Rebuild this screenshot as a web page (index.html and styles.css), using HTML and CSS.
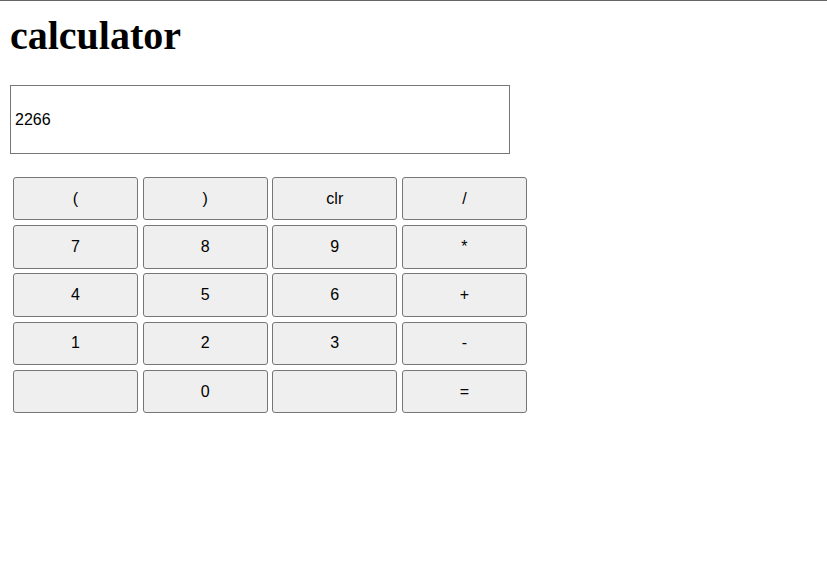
FILE: index.html
```html
<!DOCTYPE html>
<html>
<head>
<meta charset="utf-8">
<title>calculator</title>
<link rel="stylesheet" href="styles.css">
</head>
<body>
<h1 class="title">calculator</h1>
<input class="display" type="text" value="2266">
<div class="keys">
  <button class="key">(</button>
  <button class="key">)</button>
  <button class="key">clr</button>
  <button class="key">/</button>
  <button class="key">7</button>
  <button class="key">8</button>
  <button class="key">9</button>
  <button class="key">*</button>
  <button class="key">4</button>
  <button class="key">5</button>
  <button class="key">6</button>
  <button class="key">+</button>
  <button class="key">1</button>
  <button class="key">2</button>
  <button class="key">3</button>
  <button class="key">-</button>
  <button class="key"></button>
  <button class="key">0</button>
  <button class="key"></button>
  <button class="key">=</button>
</div>
</body>
</html>
```
FILE: styles.css
```css
html {
  border-top: 1px solid #666;
  background: #fff;
}
body {
  margin: 0;
  padding: 0 10px;
  font-family: "Liberation Serif", serif;
}
.title {
  font-family: "Liberation Serif", serif;
  font-size: 40px;
  font-weight: bold;
  line-height: 46px;
  margin: 12px 0 0;
  color: #000;
}
.display {
  display: block;
  box-sizing: border-box;
  width: 500px;
  height: 69px;
  margin-top: 26px;
  padding: 0 4px;
  border: 1px solid #767676;
  font-family: "Liberation Sans", Arial, sans-serif;
  font-size: 16px;
  color: #000;
  background: #fff;
  outline: none;
}
.keys {
  display: grid;
  grid-template-columns: repeat(4, 125px);
  grid-auto-rows: 43.4px;
  column-gap: 4.67px;
  row-gap: 4.85px;
  margin: 23px 0 0 3px;
}
.key {
  box-sizing: border-box;
  margin: 0;
  padding: 0;
  border: 1px solid #767676;
  border-radius: 3px;
  background: #efefef;
  font-family: "Liberation Sans", Arial, sans-serif;
  font-size: 16px;
  color: #000;
}
```
